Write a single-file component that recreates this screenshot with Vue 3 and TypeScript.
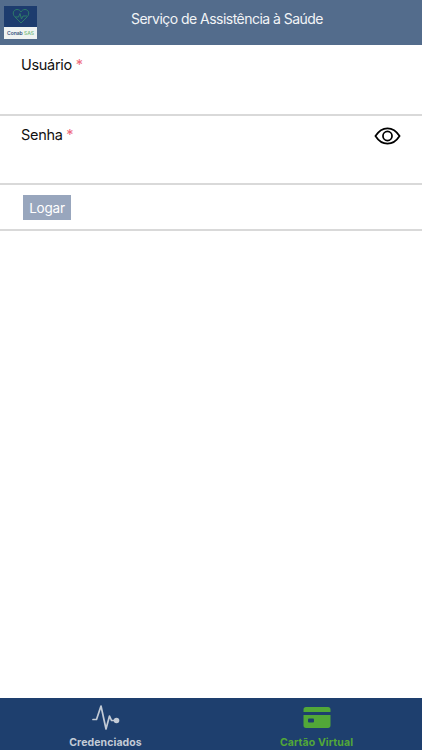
<template>
  <div class="screen">
    <header class="topbar">
      <div class="logo">
        <div class="logo_top">
          <svg width="20" height="20" viewBox="0 0 20 20" fill="none" stroke="#2d7a68" stroke-width="1">
            <path d="M10 17 L3.5 10.5 C1 7.5 2.5 3.5 6 3.5 C8 3.5 9.3 4.6 10 6 C10.7 4.6 12 3.5 14 3.5 C17.5 3.5 19 7.5 16.5 10.5 Z" />
            <path d="M4 11 H7.5 L9 7.5 L10.5 13 L12 10 H16" />
          </svg>
        </div>
        <div class="logo_bottom"><span class="conab">Conab</span> <span class="sas">SAS</span></div>
      </div>
      <div class="title">Serviço de Assistência à Saúde</div>
    </header>

    <form class="form" @submit.prevent>
      <div class="field field_user">
        <label>Usuário <span class="req">*</span></label>
      </div>
      <div class="field field_pass">
        <label>Senha <span class="req">*</span></label>
        <svg class="eye" width="27" height="20" viewBox="0 0 28 20" fill="none" stroke="#000" stroke-width="1.8">
          <path d="M1.5 10 C5 4.5 9.2 2 14 2 C18.8 2 23 4.5 26.5 10 C23 15.5 18.8 18 14 18 C9.2 18 5 15.5 1.5 10 Z" />
          <circle cx="14" cy="10" r="4.7" />
        </svg>
      </div>
      <div class="actions">
        <button class="login" type="submit">Logar</button>
      </div>
    </form>

    <nav class="tabs">
      <div class="tab">
        <svg class="pulse" width="28" height="26" viewBox="0 0 28 26" fill="none" stroke="#c3cbd6" stroke-width="1.7" stroke-linejoin="round" stroke-linecap="round">
          <path d="M1 15 H4.5 L9 1.5 L14 24.5 L17.5 11.5 L19.5 16 H23" />
          <circle cx="24.5" cy="16" r="2.8" fill="#c3cbd6" stroke="none" />
        </svg>
        <span>Credenciados</span>
      </div>
      <div class="tab tab_active">
        <svg width="28" height="22" viewBox="0 0 28 22">
          <path fill="#52a838" d="M3 0.5 H25 C26.6 0.5 27.5 1.4 27.5 3 V5.5 H0.5 V3 C0.5 1.4 1.4 0.5 3 0.5 Z M0.5 8.5 H27.5 V19 C27.5 20.6 26.6 21.5 25 21.5 H3 C1.4 21.5 0.5 20.6 0.5 19 Z" />
          <rect x="5" y="12" width="6" height="4" rx="1" fill="#1e3f6e" />
        </svg>
        <span>Cartão Virtual</span>
      </div>
    </nav>
  </div>
</template>

<script setup lang="ts">
</script>

<style>
html, body {
  margin: 0;
  background: #fff;
}
</style>

<style scoped>
.screen {
  width: 422px;
  height: 750px;
  display: flex;
  flex-direction: column;
  font-family: Inter, "Liberation Sans", sans-serif;
  overflow: hidden;
}

.topbar {
  height: 45px;
  background: #536c8c;
  display: flex;
  align-items: center;
  box-sizing: border-box;
  padding-left: 4px;
  flex-shrink: 0;
}

.logo {
  width: 33px;
  height: 33px;
  margin-top: -1px;
  display: flex;
  flex-direction: column;
  flex-shrink: 0;
}

.logo_top {
  height: 21px;
  background: #1d3c6e;
  display: flex;
  align-items: center;
  justify-content: center;
}

.logo_bottom {
  flex: 1;
  background: #f0f3f2;
  font-size: 5px;
  font-weight: 600;
  line-height: 12px;
  text-align: center;
  white-space: nowrap;
}

.conab {
  color: #33507a;
}

.sas {
  color: #7fbf88;
}

.title {
  margin-left: 94px;
  margin-bottom: 9px;
  color: #f2f4f7;
  font-size: 14px;
  letter-spacing: -0.53px;
  white-space: nowrap;
}

.form {
  flex: 1;
}

.field {
  box-sizing: border-box;
  border-bottom: 2px solid #d9d9d9;
  padding-left: 21px;
  position: relative;
  font-size: 14.5px;
  letter-spacing: -0.3px;
  color: #111;
}

.field_user {
  height: 71px;
  padding-top: 11px;
}

.field_pass {
  height: 69px;
  padding-top: 10px;
}

.req {
  color: #ee6b7e;
}

.eye {
  position: absolute;
  right: 21px;
  top: 10px;
}

.actions {
  box-sizing: border-box;
  height: 46px;
  border-bottom: 2px solid #d9d9d9;
  padding: 10px 0 0 23px;
}

.login {
  display: block;
  width: 48px;
  height: 25px;
  padding: 0;
  border: 0;
  background: #98a6bd;
  color: #fff;
  font-family: inherit;
  font-size: 13.5px;
  letter-spacing: -0.2px;
}

.tabs {
  height: 52px;
  background: #1e3f6e;
  display: flex;
  flex-shrink: 0;
}

.tab {
  flex: 1;
  display: flex;
  flex-direction: column;
  align-items: center;
  padding-top: 6px;
  box-sizing: border-box;
  color: #c3cbd6;
  font-size: 10.5px;
  font-weight: 700;
  letter-spacing: 0.1px;
}

.tab svg {
  height: 27px;
  margin-bottom: 5px;
}

.tab .pulse {
  margin-left: 1px;
}

.tab_active {
  color: #52a838;
}
</style>
